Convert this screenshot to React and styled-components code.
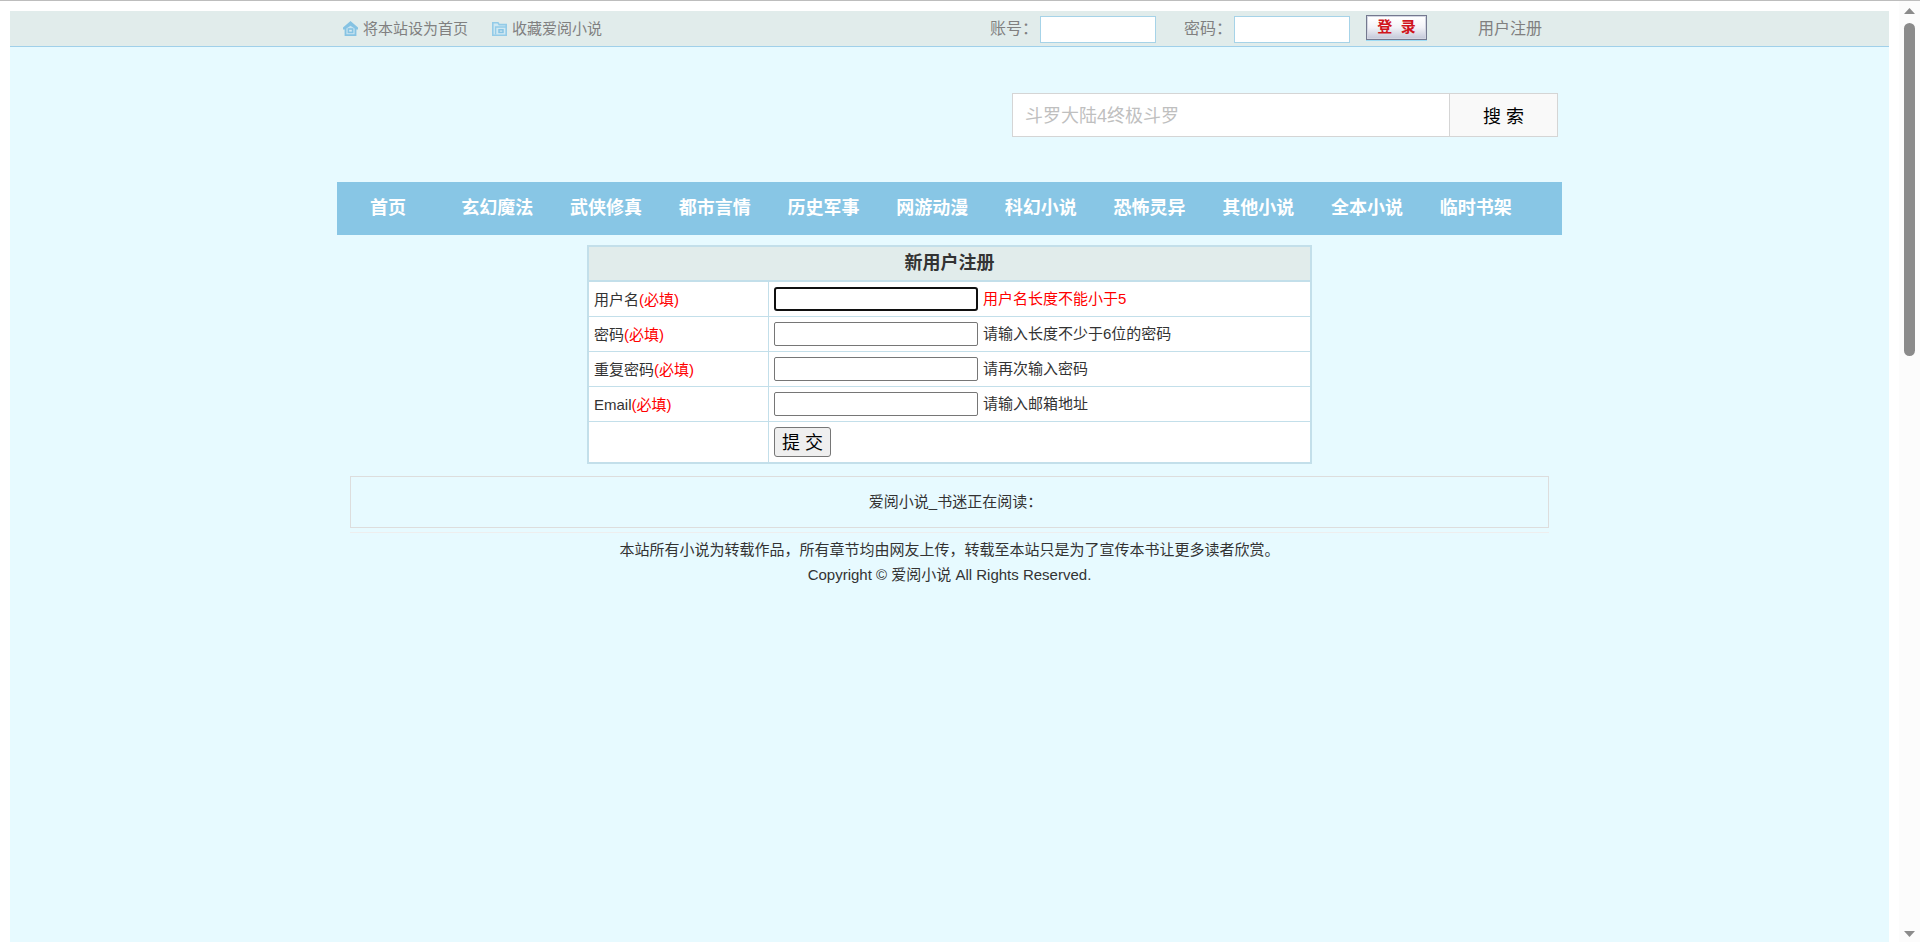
import React from "react";
import styled, { createGlobalStyle, css } from "styled-components";

const Global = createGlobalStyle`
  *, *::before, *::after { box-sizing: border-box; }
  body { margin: 0; background: #fff; }
  body, input, button {
    font-family: "Liberation Sans", "Noto Sans CJK SC", sans-serif;
  }
  body { color: #333; font-size: 15px; line-height: 25px; }
  a { color: inherit; text-decoration: none; }
`;

const Shell = styled.div`
  display: flex;
  height: 100vh;
  border-top: 1px solid #bdbdbd;
`;

const Viewport = styled.div`
  flex: 1;
  min-width: 0;
  display: flex;
  padding: 10px 10px 0;
  overflow: hidden;
`;

const Sheet = styled.div`
  flex: 1;
  min-width: 0;
  background: #e7faff;
`;

const TopBar = styled.header`
  background: #e1eceb;
  border-bottom: 1px solid #a0d0ea;
  color: #808080;
`;

const Container = styled.div`
  width: 100%;
  max-width: 1225px;
  margin: 0 auto;
`;

const TopBarInner = styled(Container)`
  display: flex;
  align-items: center;
  height: 35px;
  padding: 0 20px 0 6px;
`;

const SiteLinks = styled.div`
  display: flex;
  gap: 24px;
`;

const IconLink = styled.a`
  display: flex;
  align-items: center;
  gap: 5px;
`;

const LoginForm = styled.form`
  display: flex;
  align-items: center;
  margin-left: auto;
  font-size: 16px;
`;

const LoginField = styled.label`
  display: flex;
  align-items: center;
  gap: 2px;
  margin-right: ${(p) => (p.$last ? 16 : 28)}px;
`;

const LoginInput = styled.input`
  width: 116px;
  height: 27px;
  margin-top: 2px;
  border: 1px solid #a6d3e8;
  background: #fff;
`;

const LoginButton = styled.button`
  width: 61px;
  height: 25px;
  margin: 0 51px 2px 0;
  padding: 0 0 1px;
  border: 1px solid #74798f;
  background: linear-gradient(#ffffff 10%, #f2f2f7 50%, #c3c7d8);
  box-shadow: inset 0 0 0 1px #d3d6e2, 0 1px 0 #9fdcf5;
  color: #d0141c;
  font-size: 15px;
  font-weight: 700;
  line-height: 20px;
`;

const RegisterLink = styled.a`
  font-size: 16px;
`;

const SearchRow = styled(Container)`
  display: flex;
  justify-content: flex-end;
  padding: 46px 4px 45px;
`;

const SearchForm = styled.form`
  display: flex;
  width: 546px;
  height: 44px;
  border: 1px solid #d5d5d5;
`;

const SearchInput = styled.input`
  flex: 1;
  min-width: 0;
  padding: 2px 12px 0;
  border: 0;
  background: #fff;
  font-size: 18px;
  &::placeholder { color: #bfbfbf; }
`;

const SearchButton = styled.button`
  width: 108px;
  padding: 0;
  border: 0;
  border-left: 1px solid #d5d5d5;
  background: #f9f9f9;
  color: #000;
  font-size: 18px;
`;

const Nav = styled(Container).attrs({ as: "nav" })`
  display: flex;
  padding-right: 32px;
  background: #88c6e5;
  color: #fff;
  font-size: 18px;
  font-weight: 700;
  line-height: 53px;
  text-align: center;
`;

const NavLink = styled.a`
  flex: 1;
  white-space: nowrap;
  ${(p) => p.$home && css`
    flex: 0 0 106px;
    padding-right: 4px;
  `}
`;

const RegisterTable = styled.table`
  width: 725px;
  max-width: 100%;
  margin: 10px auto 12px;
  table-layout: fixed;
  border: 2px solid #c3dfea;
  border-spacing: 0;
  background: #fff;
`;

const LabelColumn = styled.col`
  width: 180px;
`;

const TableTitle = styled.th`
  height: 35px;
  padding: 0;
  border-bottom: 2px solid #c3dfea;
  background: #e1eceb;
  font-size: 18px;
`;

const Cell = styled.td`
  height: ${(p) => (p.$last ? 40 : 35)}px;
  padding: 0 5px;
  border-bottom: ${(p) => (p.$last ? 0 : 1)}px solid #c3dfea;
  &:first-child { border-right: 1px solid #c3dfea; }
`;

const Required = styled.span`
  color: #f00;
`;

const FieldLine = styled.div`
  display: flex;
  align-items: center;
  gap: 5px;
`;

const TextInput = styled.input`
  width: 204px;
  height: 24px;
  border: 1px solid #767676;
  border-radius: 2px;
  background: #fff;
  ${(p) => p.$active && css`
    border: 2px solid #101010;
    border-radius: 3px;
  `}
`;

const Hint = styled.span`
  padding-bottom: 2px;
  color: ${(p) => (p.$error ? "#f00" : "inherit")};
`;

const SubmitButton = styled.button`
  display: block;
  width: 57px;
  height: 30px;
  padding: 0 0 2px;
  border: 1px solid #767676;
  border-radius: 3px;
  background: #efefef;
  color: #000;
  font-size: 18px;
`;

const Footer = styled.footer`
  width: 100%;
  max-width: 1199px;
  margin: 0 auto;
  text-align: center;
`;

const ReadingBox = styled.div`
  padding: 12px 0 13px 12px;
  border: 1px solid #ddd;
  line-height: 25px;
`;

const FooterNote = styled.div`
  margin-top: 4px;
  padding-top: 4px;
  border-top: 1px solid #eee;
  p { margin: 0; }
`;

const ScrollTrack = styled.div`
  display: flex;
  flex-direction: column;
  align-items: center;
  width: 21px;
  padding: 7px 0 5px;
  background: #fcfcfc;
`;

const ScrollRail = styled.div`
  flex: 1;
  width: 11px;
  margin: 9px 0;
`;

const ScrollThumb = styled.div`
  height: 37%;
  border-radius: 6px;
  background: #8b8b8b;
`;

const Arrow = ({ down }) => (
  <svg width="11" height="6" viewBox="0 0 11 6" aria-hidden="true">
    <path d={down ? "M0 0H11L5.5 6Z" : "M0 6H11L5.5 0Z"} fill="#8b8b8b" />
  </svg>
);

const HomeIcon = () => (
  <svg width="15" height="15" viewBox="0 0 15 15" aria-hidden="true">
    <path d="M7.5 0L15 6.4V8.4H13.2L7.5 4.6L1.8 8.4H0V6.4Z" fill="#86c3e3" />
    <path d="M1.6 7.4L7.5 2.6L13.4 7.4V15H1.6Z" fill="#86c3e3" />
    <path d="M3.4 7.6L7.5 4.8L11.6 7.6V13.2H3.4Z" fill="#c9e4f0" />
    <rect x="5.4" y="8" width="4.2" height="3.4" fill="#d8ebf2" stroke="#86c3e3" strokeWidth="1.6" />
  </svg>
);

const FolderIcon = () => (
  <svg width="15" height="15" viewBox="0 0 15 15" aria-hidden="true">
    <path d="M0.8 14.2V1.8H6L7.2 3.6H14.2V14.2Z" fill="#d0e8f2" stroke="#93cbe8" strokeWidth="1.6" />
    <path d="M3.6 13.5V6H14" fill="none" stroke="#93cbe8" strokeWidth="1.4" />
    <rect x="7" y="8.8" width="4" height="2.6" fill="#d8ebf2" stroke="#86c3e3" strokeWidth="1.5" />
  </svg>
);

const categories = [
  "首页", "玄幻魔法", "武侠修真", "都市言情", "历史军事", "网游动漫",
  "科幻小说", "恐怖灵异", "其他小说", "全本小说", "临时书架",
];

const fields = [
  { id: "username", label: "用户名", type: "text", hint: "用户名长度不能小于5", error: true, active: true },
  { id: "password", label: "密码", type: "password", hint: "请输入长度不少于6位的密码" },
  { id: "repassword", label: "重复密码", type: "password", hint: "请再次输入密码" },
  { id: "email", label: "Email", type: "text", hint: "请输入邮箱地址" },
];

const stop = (e) => e.preventDefault();

export default function App() {
  return (
    <>
      <Global />
      <Shell>
        <Viewport>
          <Sheet>
            <TopBar>
              <TopBarInner>
                <SiteLinks>
                  <IconLink href="#home"><HomeIcon />将本站设为首页</IconLink>
                  <IconLink href="#favorite"><FolderIcon />收藏爱阅小说</IconLink>
                </SiteLinks>
                <LoginForm onSubmit={stop}>
                  <LoginField>账号：<LoginInput type="text" name="account" /></LoginField>
                  <LoginField $last>密码：<LoginInput type="password" name="pass" /></LoginField>
                  <LoginButton type="submit">登&nbsp;&nbsp;录</LoginButton>
                </LoginForm>
                <RegisterLink href="#register">用户注册</RegisterLink>
              </TopBarInner>
            </TopBar>

            <SearchRow>
              <SearchForm onSubmit={stop}>
                <SearchInput type="text" aria-label="搜索" placeholder="斗罗大陆4终极斗罗" />
                <SearchButton type="submit">搜 索</SearchButton>
              </SearchForm>
            </SearchRow>

            <Nav>
              {categories.map((name, i) => (
                <NavLink key={name} href="#" $home={i === 0}>{name}</NavLink>
              ))}
            </Nav>

            <form onSubmit={stop}>
              <RegisterTable>
                <colgroup><LabelColumn /><col /></colgroup>
                <thead>
                  <tr><TableTitle colSpan={2}>新用户注册</TableTitle></tr>
                </thead>
                <tbody>
                  {fields.map((f) => (
                    <tr key={f.id}>
                      <Cell>
                        <label htmlFor={f.id}>{f.label}<Required>(必填)</Required></label>
                      </Cell>
                      <Cell>
                        <FieldLine>
                          <TextInput id={f.id} type={f.type} $active={f.active} />
                          <Hint $error={f.error}>{f.hint}</Hint>
                        </FieldLine>
                      </Cell>
                    </tr>
                  ))}
                  <tr>
                    <Cell $last />
                    <Cell $last><SubmitButton type="submit">提 交</SubmitButton></Cell>
                  </tr>
                </tbody>
              </RegisterTable>
            </form>

            <Footer>
              <ReadingBox>爱阅小说_书迷正在阅读：</ReadingBox>
              <FooterNote>
                <p>本站所有小说为转载作品，所有章节均由网友上传，转载至本站只是为了宣传本书让更多读者欣赏。</p>
                <p>Copyright © 爱阅小说 All Rights Reserved.</p>
              </FooterNote>
            </Footer>
          </Sheet>
        </Viewport>
        <ScrollTrack aria-hidden="true">
          <Arrow />
          <ScrollRail><ScrollThumb /></ScrollRail>
          <Arrow down />
        </ScrollTrack>
      </Shell>
    </>
  );
}
